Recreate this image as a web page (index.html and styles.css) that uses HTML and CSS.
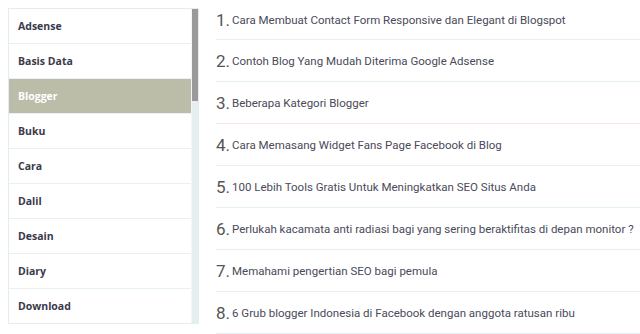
FILE: index.html
```html
<!DOCTYPE html>
<html>
<head>
<meta charset="utf-8">
<link rel="stylesheet" href="styles.css">
</head>
<body>
<div class="page">
  <div class="cats">
    <ul class="cat-list">
      <li class="cat">Adsense</li>
      <li class="cat">Basis Data</li>
      <li class="cat active">Blogger</li>
      <li class="cat">Buku</li>
      <li class="cat">Cara</li>
      <li class="cat">Dalil</li>
      <li class="cat">Desain</li>
      <li class="cat">Diary</li>
      <li class="cat">Download</li>
    </ul>
    <div class="scroll"><div class="thumb"></div></div>
  </div>
  <ol class="posts">
    <li class="post"><span class="num">1.</span><span class="title">Cara Membuat Contact Form Responsive dan Elegant di Blogspot</span></li>
    <li class="post"><span class="num">2.</span><span class="title">Contoh Blog Yang Mudah Diterima Google Adsense</span></li>
    <li class="post pink"><span class="num">3.</span><span class="title">Beberapa Kategori Blogger</span></li>
    <li class="post"><span class="num">4.</span><span class="title">Cara Memasang Widget Fans Page Facebook di Blog</span></li>
    <li class="post"><span class="num">5.</span><span class="title">100 Lebih Tools Gratis Untuk Meningkatkan SEO Situs Anda</span></li>
    <li class="post"><span class="num">6.</span><span class="title">Perlukah kacamata anti radiasi bagi yang sering beraktifitas di depan monitor ?</span></li>
    <li class="post"><span class="num">7.</span><span class="title">Memahami pengertian SEO bagi pemula</span></li>
    <li class="post"><span class="num">8.</span><span class="title">6 Grub blogger Indonesia di Facebook dengan anggota ratusan ribu</span></li>
  </ol>
</div>
</body>
</html>
```
FILE: styles.css
```css
html, body {
  margin: 0;
  padding: 0;
  background: #fff;
  overflow: hidden;
}
.page {
  display: flex;
  align-items: flex-start;
  padding: 0 0 0 8px;
  gap: 17px;
}
.cats {
  flex: none;
  width: 191px;
  margin-top: 8px;
  border: 1px solid #e1edf0;
  display: flex;
  box-sizing: border-box;
}
.cat-list {
  list-style: none;
  margin: 0;
  padding: 0;
  flex: 1;
}
.cat {
  height: 34px;
  border-bottom: 1px solid #e6f1f4;
  padding-left: 9px;
  display: flex;
  align-items: center;
  font-family: "Open Sans", sans-serif;
  font-weight: 700;
  font-size: 10.5px;
  color: #3a3a4a;
}
.cat:last-child {
  border-bottom: none;
}
.cat.active {
  background: #bbbda9;
  color: #fff;
}
.scroll {
  width: 6px;
  background: #e6eef0;
  border-left: 1px solid #f2f6f7;
}
.thumb {
  height: 92px;
  background: #9a9b98;
}
.posts {
  list-style: none;
  margin: 0;
  padding: 0;
  flex: 1;
  min-width: 0;
}
.post {
  height: 41px;
  border-bottom: 1px solid #e3eff3;
  display: flex;
  align-items: center;
  white-space: nowrap;
  font-family: Roboto, sans-serif;
  margin-top: -3px;
  padding-top: 3px;
}
.post:first-child {
  margin-top: 0;
  height: 39px;
  padding-top: 0;
}
.post.pink {
  border-bottom-color: #fbe3e7;
}
.num {
  flex: none;
  font-size: 17px;
  color: #555;
  width: 16px;
}
.title {
  flex: none;
  font-size: 11.5px;
  color: #4a4a5a;
}
```
